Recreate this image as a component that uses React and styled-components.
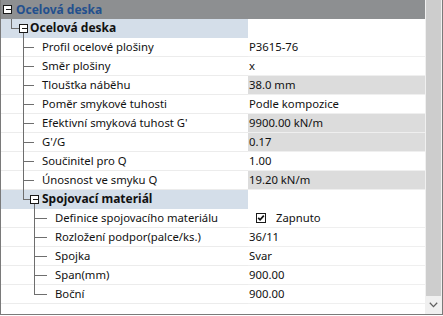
import React from 'react';
import styled, { createGlobalStyle } from 'styled-components';

const GlobalStyle = createGlobalStyle`
  html, body {
    margin: 0;
    padding: 0;
    background: #ffffff;
  }
  body {
    font-family: 'Noto Sans', 'Open Sans', sans-serif;
    font-size: 12px;
  }
`;

const LINE = '#6e6e6e';
const ROW_H = 19;

// tree guide spec: v = vertical lines [x, part], h = horizontal tick [x1, x2], box = center x of the +/- box, down = line below the box
const rows = [
  { kind: 'header', label: 'Ocelová deska', indent: 15, guide: { box: 7, down: false } },
  { kind: 'group', label: 'Ocelová deska', indent: 29, guide: { v: [[11, 'top']], h: [11, 19], box: 23, down: true } },
  { label: 'Profil ocelové plošiny', value: 'P3615-76', indent: 41, guide: { v: [[23, 'full']], h: [23, 33] } },
  { label: 'Směr plošiny', value: 'x', indent: 41, guide: { v: [[23, 'full']], h: [23, 33] } },
  { label: 'Tloušťka náběhu', value: '38.0 mm', shaded: true, indent: 41, guide: { v: [[23, 'full']], h: [23, 33] } },
  { label: 'Poměr smykové tuhosti', value: 'Podle kompozice', indent: 41, guide: { v: [[23, 'full']], h: [23, 33] } },
  { label: "Efektivní smyková tuhost G'", value: '9900.00 kN/m', shaded: true, indent: 41, guide: { v: [[23, 'full']], h: [23, 33] } },
  { label: "G'/G", value: '0.17', shaded: true, indent: 41, guide: { v: [[23, 'full']], h: [23, 33] } },
  { label: 'Součinitel pro Q', value: '1.00', indent: 41, guide: { v: [[23, 'full']], h: [23, 33] } },
  { label: 'Únosnost ve smyku Q', value: '19.20 kN/m', shaded: true, indent: 41, guide: { v: [[23, 'full']], h: [23, 33] } },
  { kind: 'group', label: 'Spojovací materiál', indent: 41, guide: { v: [[23, 'top']], h: [23, 30], box: 34, down: true } },
  { label: 'Definice spojovacího materiálu', check: true, value: 'Zapnuto', indent: 54, guide: { v: [[34, 'full']], h: [34, 46] } },
  { label: 'Rozložení podpor(palce/ks.)', value: '36/11', indent: 54, guide: { v: [[34, 'full']], h: [34, 46] } },
  { label: 'Spojka', value: 'Svar', indent: 54, guide: { v: [[34, 'full']], h: [34, 46] } },
  { label: 'Span(mm)', value: '900.00', indent: 54, guide: { v: [[34, 'full']], h: [34, 46] } },
  { label: 'Boční', value: '900.00', indent: 54, guide: { v: [[34, 'top']], h: [34, 46] } },
];

const Guide = ({ width, guide }) => {
  const mid = 9.5;
  const { v = [], h, box, down } = guide;
  return (
    <GuideSvg width={width} height={ROW_H} viewBox={`0 0 ${width} ${ROW_H}`}>
      {v.map(([x, part]) => (
        <line
          key={x}
          x1={x - 0.5}
          x2={x - 0.5}
          y1={0}
          y2={part === 'full' ? ROW_H : mid}
          stroke={LINE}
          shapeRendering='crispEdges'
        />
      ))}
      {h && (
        <line x1={h[0] - 1} x2={h[1]} y1={mid} y2={mid} stroke={LINE} shapeRendering='crispEdges' />
      )}
      {down && (
        <line x1={box - 0.5} x2={box - 0.5} y1={14} y2={ROW_H} stroke={LINE} shapeRendering='crispEdges' />
      )}
      {box !== undefined && (
        <g shapeRendering='crispEdges'>
          <rect x={box - 4.5} y={5.5} width={8} height={8} fill='#ffffff' stroke='#1a1a1a' />
          <line x1={box - 2.5} x2={box + 2.5} y1={9.5} y2={9.5} stroke='#1a1a1a' />
        </g>
      )}
    </GuideSvg>
  );
};

const CheckBox = () => (
  <CheckSvg width='10' height='10' viewBox='0 0 10 10'>
    <rect x='0.5' y='0.5' width='9' height='9' fill='#ffffff' stroke='#1a1a1a' shapeRendering='crispEdges' />
    <path d='M2.2 4.8 L4.1 6.8 L7.8 2.6' fill='none' stroke='#111' strokeWidth='1.7' />
  </CheckSvg>
);

function App() {
  return (
    <>
      <GlobalStyle />
      <Frame>
        <Grid>
          {rows.map((row, i) => {
            if (row.kind === 'header') {
              return (
                <HeaderRow key={i}>
                  <Guide width={row.indent} guide={row.guide} />
                  <HeaderText>{row.label}</HeaderText>
                </HeaderRow>
              );
            }
            const group = row.kind === 'group';
            return (
              <Row key={i}>
                <LabelCell $group={group}>
                  <Guide width={row.indent} guide={row.guide} />
                  <LabelText $group={group}>{row.label}</LabelText>
                </LabelCell>
                <ValueCell $shaded={row.shaded} $group={group}>
                  {row.check && <CheckBox />}
                  {row.value && <ValueText $check={row.check}>{row.value}</ValueText>}
                </ValueCell>
              </Row>
            );
          })}
        </Grid>
        <ScrollBar>
          <Thumb />
          <ArrowButton>
            <svg width='9' height='6' viewBox='0 0 9 6'>
              <path d='M0.8 0.8 L4.5 4.6 L8.2 0.8' fill='none' stroke='#606060' strokeWidth='1.3' />
            </svg>
          </ArrowButton>
        </ScrollBar>
      </Frame>
    </>
  );
}

const Frame = styled.div`
  width: 443px;
  height: 315px;
  box-sizing: border-box;
  border-left: 1px solid #7a7a7a;
  border-right: 1px solid #7a7a7a;
  border-bottom: 1px solid #7a7a7a;
  display: flex;
  background: #ffffff;
`;

const Grid = styled.div`
  flex: 1;
  display: flex;
  flex-direction: column;
`;

const HeaderRow = styled.div`
  height: ${ROW_H}px;
  display: flex;
  align-items: center;
  background: #8d8f91;
`;

const HeaderText = styled.span`
  color: #23508e;
  font-weight: 700;
  white-space: nowrap;
  margin-top: -1px;
`;

const Row = styled.div`
  height: ${ROW_H}px;
  display: flex;
`;

const LabelCell = styled.div`
  width: 247px;
  display: flex;
  align-items: center;
  box-sizing: border-box;
  background: ${(p) => (p.$group ? '#d4dee9' : '#ffffff')};
  border-bottom: 1px solid ${(p) => (p.$group ? '#d4dee9' : '#ececec')};
  height: ${ROW_H}px;
`;

const GuideSvg = styled.svg`
  flex-shrink: 0;
  display: block;
  align-self: flex-start;
`;

const LabelText = styled.span`
  color: #111;
  font-weight: ${(p) => (p.$group ? 700 : 400)};
  font-size: ${(p) => (p.$group ? '12px' : '11.3px')};
  white-space: nowrap;
  margin-top: -1px;
`;

const ValueCell = styled.div`
  flex: 1;
  display: flex;
  align-items: center;
  box-sizing: border-box;
  height: ${ROW_H}px;
  padding-left: 1px;
  background: ${(p) => (p.$shaded ? '#dcdcdc' : '#ffffff')};
  border-bottom: 1px solid ${(p) => (p.$group ? '#ffffff' : '#efefef')};
`;

const CheckSvg = styled.svg`
  margin-left: 7px;
  flex-shrink: 0;
`;

const ValueText = styled.span`
  color: #111;
  font-size: 11.3px;
  white-space: nowrap;
  margin-left: ${(p) => (p.$check ? '10px' : '0')};
  margin-top: -1px;
`;

const ScrollBar = styled.div`
  width: 17px;
  background: #f0f0f0;
  display: flex;
  flex-direction: column;
`;

const Thumb = styled.div`
  flex: 1;
  margin: 0 1px;
  background: #cdcdcd;
`;

const ArrowButton = styled.div`
  height: 18px;
  display: flex;
  align-items: center;
  justify-content: center;
`;

export default App;
